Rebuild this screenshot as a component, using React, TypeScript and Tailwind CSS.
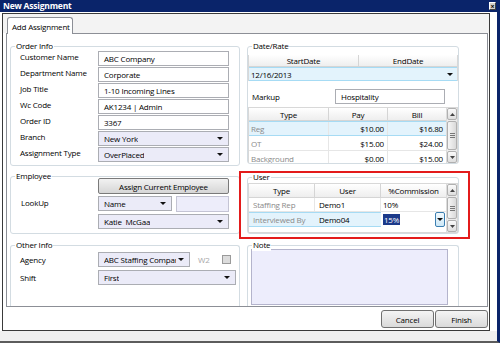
import React from 'react'

const Arrow = () => (
  <svg width="6" height="3" viewBox="0 0 6 3" className="shrink-0">
    <path d="M0 0H6L3 3Z" fill="#111" />
  </svg>
)

const Group = ({ title, className = '', children }: { title: string; className?: string; children?: React.ReactNode }) => (
  <div className={`relative border border-[#d3dce2] ${className}`}>
    <span className="absolute left-[4px] top-[-7px] bg-white px-[1px] leading-[12px]">{title}</span>
    {children}
  </div>
)

const TextBox = ({ value, className = '' }: { value: string; className?: string }) => (
  <div className={`h-[15px] border border-[#abadb3] bg-white pl-[5px] flex items-center whitespace-nowrap overflow-hidden ${className}`}>
    {value}
  </div>
)

const Combo = ({ value, className = '' }: { value: string; className?: string }) => (
  <div className={`h-[15px] border border-[#abadb3] bg-[#ebebf8] pl-[5px] pr-[5px] flex items-center justify-between gap-[2px] whitespace-nowrap overflow-hidden ${className}`}>
    <span className="overflow-hidden">{value}</span>
    <Arrow />
  </div>
)

const ScrollBar = () => (
  <div className="w-[11px] shrink-0 flex flex-col bg-[#ececec] border-l border-[#dcdcdc]">
    <div className="h-[12px] border border-[#b0b0b0] rounded-[2px] bg-gradient-to-b from-[#fafafa] to-[#dedede] flex items-center justify-center">
      <svg width="5" height="3" viewBox="0 0 5 3"><path d="M2.5 0L5 3H0Z" fill="#444" /></svg>
    </div>
    <div className="flex-1 my-[1px] border border-[#b0b0b0] rounded-[2px] bg-gradient-to-r from-[#f6f6f6] to-[#dadada] flex flex-col items-center justify-center gap-[1px]">
      <div className="w-[5px] h-[1px] bg-[#777]" />
      <div className="w-[5px] h-[1px] bg-[#777]" />
      <div className="w-[5px] h-[1px] bg-[#777]" />
    </div>
    <div className="h-[12px] border border-[#b0b0b0] rounded-[2px] bg-gradient-to-b from-[#fafafa] to-[#dedede] flex items-center justify-center">
      <svg width="5" height="3" viewBox="0 0 5 3"><path d="M0 0H5L2.5 3Z" fill="#444" /></svg>
    </div>
  </div>
)

const Head = ({ className = '', children }: { className?: string; children?: React.ReactNode }) => (
  <div className={`h-full flex items-center justify-center border-r border-[#d5d5d5] ${className}`}>{children}</div>
)

const orderRows = [
  ['Customer Name', 'ABC Company', 'text'],
  ['Department Name', 'Corporate', 'text'],
  ['Job Title', '1-10 Incoming Lines', 'text'],
  ['Wc Code', 'AK1234 | Admin', 'text'],
  ['Order ID', '3367', 'text'],
  ['Branch', 'New York', 'combo'],
  ['Assignment Type', 'OverPlaced', 'combo'],
]

const rates = [
  ['Reg', '$10.00', '$16.80'],
  ['OT', '$15.00', '$24.00'],
  ['Background', '$0.00', '$15.00'],
]

export default function App() {
  return (
    <div className="w-[500px] h-[343px] overflow-hidden bg-white flex flex-col font-['Open_Sans',sans-serif] text-[8px] tracking-[-0.2px] leading-[11px] text-black">
      {/* title bar */}
      <div className="h-[12px] shrink-0 bg-[#0a246a] flex items-center justify-between pl-[3px] pr-[4px]">
        <span className="text-white font-bold text-[8.5px] leading-[12px]">New Assignment</span>
        <div className="w-[7px] h-[8px] bg-[#d4d0c8] border border-t-white border-l-white border-r-[#404040] border-b-[#404040] flex items-center justify-center text-[7px] leading-none font-bold">
          ×
        </div>
      </div>

      <div className="flex-1 flex flex-col border-r-[3px] border-r-[#0a246a] border-b-[2px] border-b-[#5c5c5c]">
        <div className="pt-[1px] pl-[2px] pr-[7px] bg-white">
          <div className="h-[318px] border border-[#3a3a3a] flex flex-col">
            {/* tab strip */}
            <div className="h-[19px] shrink-0 bg-[#f3f3f3] flex items-end pl-[4px]">
              <div className="relative z-10 -mb-[1px] h-[17px] w-[66px] border border-b-0 border-[#8c8f96] rounded-t-[3px] bg-white flex items-center pl-[4px]">
                Add Assignment
              </div>
            </div>

            {/* tab page */}
            <div className="relative ml-[3px] w-[482px] h-[274px] shrink-0 border border-[#8c8f96] bg-white flex pl-[3px] pt-[12px] gap-[7px]">
              {/* left column */}
              <div className="w-[230px] flex flex-col">
                <Group title="Order Info" className="h-[120px] rounded-[3px] pt-[4px] pl-[9px] flex flex-col gap-[1px]">
                  {orderRows.map(([label, value, kind]) => (
                    <div key={label} className="h-[15px] flex">
                      <div className="w-[78px] leading-[12px]">{label}</div>
                      {kind === 'text' ? <TextBox value={value} className="w-[131px]" /> : <Combo value={value} className="w-[131px]" />}
                    </div>
                  ))}
                </Group>

                <Group title="Employee" className="mt-[10px] h-[58px] rounded-[3px] pt-[1px] pl-[10px] flex">
                  <div className="w-[77px] pt-[19px]">LookUp</div>
                  <div className="flex flex-col">
                    <div className="w-[131px] h-[16px] border border-[#7a7a7a] rounded-[2px] bg-gradient-to-b from-[#f2f2f2] to-[#d6d6d6] flex items-center justify-center">
                      Assign Current Employee
                    </div>
                    <div className="mt-[2px] flex gap-[4px]">
                      <Combo value="Name" className="w-[74px] h-[14px]" />
                      <div className="w-[53px] h-[16px] border border-[#c4c4d4] bg-[#ededfa]" />
                    </div>
                    <Combo value="Katie  McGaa" className="mt-[2px] w-[131px] h-[14px] whitespace-pre" />
                  </div>
                </Group>

                <Group title="Other Info" className="mt-[11px] flex-1 border-b-0 rounded-t-[3px] pt-[6px] pl-[9px] flex flex-col gap-[3px]">
                  <div className="flex items-center">
                    <div className="w-[78px]">Agency</div>
                    <Combo value="ABC Staffing Company" className="w-[92px] h-[14px]" />
                    <span className="ml-[8px] text-[#a8a8a8]">W2</span>
                    <div className="ml-[12px] w-[9px] h-[9px] border border-[#9a9a9a] bg-[#dcdcdc]" />
                  </div>
                  <div className="flex items-center">
                    <div className="w-[78px]">Shift</div>
                    <Combo value="First" className="w-[138px] h-[14px]" />
                  </div>
                </Group>
              </div>

              {/* right column */}
              <div className="w-[212px] flex flex-col">
                <Group title="Date/Rate" className="h-[118px] rounded-[3px] flex flex-col">
                  <div className="mt-[8px] border-x border-[#d8d8d8]">
                    <div className="h-[12px] flex bg-gradient-to-b from-white to-[#eeeeee] border-b border-[#d5d5d5]">
                      <Head className="w-[110px]">StartDate</Head>
                      <Head className="flex-1 border-r-0">EndDate</Head>
                    </div>
                    <div className="h-[14px] flex items-center justify-between bg-[#e3f3fc] border-y border-[#a6dbf4] pl-[2px] pr-[4px]">
                      <span>12/16/2013</span>
                      <Arrow />
                    </div>
                  </div>
                  <div className="mt-[8px] flex items-center">
                    <div className="w-[87px] pl-[4px]">Markup</div>
                    <TextBox value="Hospitality" className="w-[110px] h-[14px] pl-[3px]" />
                  </div>
                  <div className="mt-[3px] flex-1 flex overflow-hidden border-x border-t border-[#d8d8d8]">
                    <div className="flex-1 flex flex-col">
                      <div className="h-[13px] shrink-0 flex bg-gradient-to-b from-white to-[#eeeeee] border-b border-[#d5d5d5]">
                        <Head className="w-[80px]">Type</Head>
                        <Head className="w-[59px]">Pay</Head>
                        <Head className="flex-1 border-r-0">Bill</Head>
                      </div>
                      {rates.map(([type, pay, bill], i) => (
                        <div
                          key={type}
                          className={`h-[15px] shrink-0 flex ${i === 0 ? 'bg-[#e3f3fc] border-y border-[#a6dbf4]' : 'border-b border-[#e6e6e6]'}`}
                        >
                          <div className="w-[80px] pl-[2px] flex items-center text-[#8a8a8a] border-r border-[#e6e6e6]">{type}</div>
                          <div className="w-[59px] pr-[3px] flex items-center justify-end border-r border-[#e6e6e6]">{pay}</div>
                          <div className="flex-1 pr-[3px] flex items-center justify-end">{bill}</div>
                        </div>
                      ))}
                    </div>
                    <ScrollBar />
                  </div>
                </Group>

                <Group title="User" className="mt-[13px] h-[57px] rounded-[3px] flex flex-col">
                  <div className="mt-[5px] flex-1 flex overflow-hidden border border-[#d8d8d8]">
                    <div className="flex-1 flex flex-col">
                      <div className="h-[14px] shrink-0 flex bg-gradient-to-b from-white to-[#eeeeee] border-b border-[#d5d5d5]">
                        <Head className="w-[66px]">Type</Head>
                        <Head className="w-[66px]">User</Head>
                        <Head className="flex-1 border-r-0">%Commission</Head>
                      </div>
                      <div className="h-[14px] shrink-0 flex border-b border-[#e6e6e6]">
                        <div className="w-[66px] pl-[4px] flex items-center text-[#8a8a8a] border-r border-[#e6e6e6]">Staffing Rep</div>
                        <div className="w-[66px] pl-[4px] flex items-center border-r border-[#e6e6e6]">Demo1</div>
                        <div className="flex-1 pl-[2px] flex items-center">10%</div>
                      </div>
                      <div className="h-[15px] shrink-0 flex">
                        <div className="w-[66px] pl-[4px] flex items-center text-[#8a8a8a] bg-[#e3f3fc] border-y border-[#a6dbf4]">Interviewed By</div>
                        <div className="w-[66px] pl-[4px] flex items-center bg-[#e3f3fc] border-y border-[#a6dbf4]">Demo04</div>
                        <div className="flex-1 pl-[2px] pr-[1px] flex items-center justify-between">
                          <span className="bg-[#1c3a8a] text-white px-[1px]">15%</span>
                          <div className="w-[10px] h-[15px] border border-[#3c7fb1] rounded-[2px] bg-gradient-to-b from-[#f2f9fd] to-[#cde8f7] flex items-center justify-center">
                            <Arrow />
                          </div>
                        </div>
                      </div>
                    </div>
                    <ScrollBar />
                  </div>
                </Group>

                <Group title="Note" className="mt-[11px] flex-1 border-b-0 rounded-t-[3px] pl-[3px] pt-[3px] pb-[1px] flex flex-col">
                  <div className="w-[197px] flex-1 border border-[#b4b4cc] bg-[#ededfc]" />
                </Group>
              </div>

              {/* highlight annotation */}
              <div className="absolute left-[232px] top-[137px] w-[231px] h-[68px] border-2 border-[#e31b1b] pointer-events-none" />
            </div>

            {/* buttons */}
            <div className="flex justify-end gap-[1px] pt-[3px] pr-[1px]">
              <div className="w-[53px] h-[18px] border border-[#707070] rounded-[3px] bg-gradient-to-b from-[#f4f4f4] to-[#dadada] flex items-center justify-center">
                Cancel
              </div>
              <div className="w-[53px] h-[18px] border border-[#707070] rounded-[3px] bg-gradient-to-b from-[#f4f4f4] to-[#dadada] flex items-center justify-center">
                Finish
              </div>
            </div>
          </div>
        </div>
        <div className="flex-1 bg-[#f0f0f0]" />
      </div>
    </div>
  )
}
